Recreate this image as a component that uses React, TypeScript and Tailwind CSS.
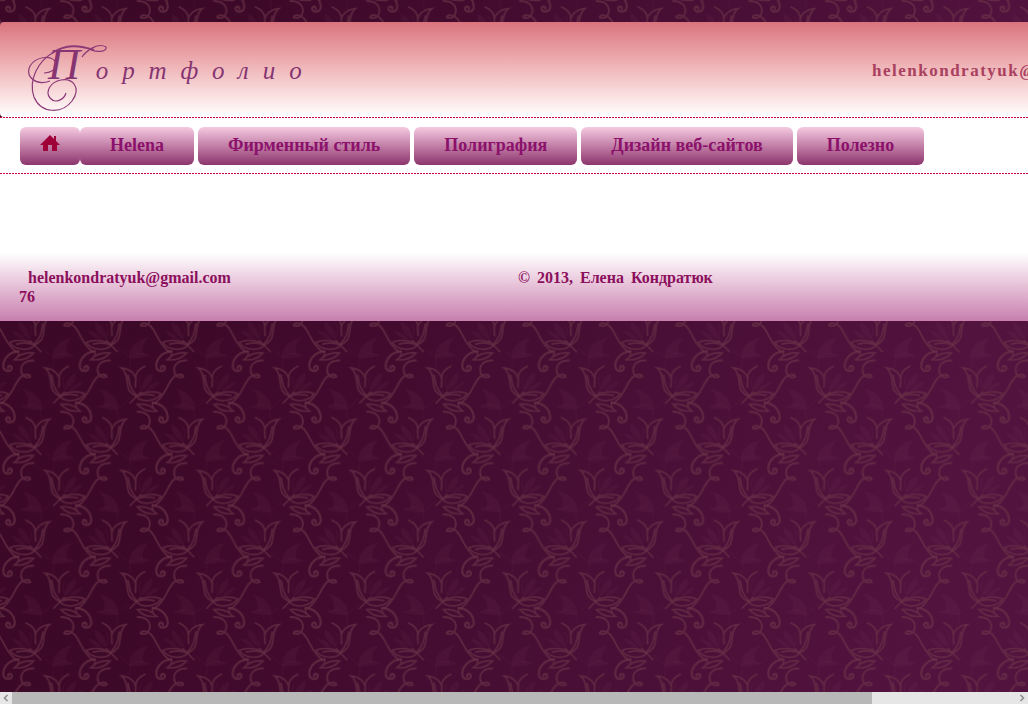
import React from "react";

const NAV = ["Фирменный стиль", "Полиграфия", "Дизайн веб-сайтов", "Полезно"];

function Flower() {
  return (
    <>
      <g fill="none" stroke="#6e3548" strokeOpacity="0.62" strokeLinecap="round">
        <path strokeWidth="5.5" d="M183 -33C205 -33 222 -22 220 -2C219 15 205 21 193 17C190 9 210 5 222 18C242 38 245 72 278 95" />
        <path strokeWidth="6.5" d="M284 94C252 98 236 122 240 143C245 158 268 155 265 142C263 135 252 137 254 145" />
        <path strokeWidth="5" d="M259 67C280 57 318 61 334 75C318 95 274 91 259 67ZM280 72C295 68 318 68 330 75M320 62L352 95" />
        <path strokeWidth="5" d="M285 94C287 106 281 114 273 119C298 122 318 113 330 99C310 97 290 100 273 119" />
        <path strokeWidth="5" d="M308 -15C324 -8 335 3 336 20C338 8 352 -8 378 -10C354 8 366 42 353 60C347 68 341 72 333 75M335 18L336 47M358 12C354 35 353 50 333 72" />
      </g>
      <g fill="#7a3d59" fillOpacity="0.12">
        <path d="M388 114C384 84 410 59 446 52C428 70 426 86 430 104C414 97 400 105 388 114Z" />
        <path d="M388 114C408 94 434 96 452 107C428 112 408 117 388 114Z" />
        <path d="M318 58C292 42 282 20 286 6C306 14 320 35 318 58ZM306 60C290 58 270 44 264 32C285 34 300 45 306 60Z" />
      </g>
      <path fill="none" stroke="#7a3d59" strokeOpacity="0.16" strokeWidth="2" d="M355 82Q368 96 392 114L388 145M318 57Q330 30 318 12" />
    </>
  );
}

function Backdrop() {
  return (
    <svg className="absolute inset-0 -z-10 h-full w-full" aria-hidden="true">
      <defs>
        <linearGradient id="plum" x1="0" y1="0" x2="1" y2="0.15">
          <stop offset="0" stopColor="#3b0827" />
          <stop offset="0.25" stopColor="#3d0929" />
          <stop offset="1" stopColor="#52133e" />
        </linearGradient>
        <pattern id="floral" width="229.5" height="308" patternUnits="userSpaceOnUse" patternTransform="translate(0 320) scale(0.33333)">
          {[-459, -229.5, 0].map((x) =>
            [-308, 0, 308].map((y) => (
              <g key={`${x},${y}`} transform={`translate(${x} ${y})`}>
                <Flower />
              </g>
            ))
          )}
          {[-459, -229.5, 0].map((x) =>
            [-462, -154, 154].map((y) => (
              <g key={`${x},${y}`} transform={`translate(${x + 513} ${y}) scale(-1 1)`}>
                <Flower />
              </g>
            ))
          )}
        </pattern>
      </defs>
      <rect width="100%" height="100%" fill="url(#plum)" />
      <rect width="100%" height="100%" fill="url(#floral)" />
    </svg>
  );
}

function DashedRule() {
  return <div className="h-px bg-[repeating-linear-gradient(90deg,#cc0044_0_2px,#ffffff_2px_3px)]" />;
}

export default function App() {
  return (
    <div className="relative isolate flex min-h-screen flex-col overflow-hidden pt-[22px] font-['Liberation_Serif',serif] font-bold">
      <Backdrop />
      <header className="flex h-[95px] items-center justify-between overflow-hidden rounded-l bg-linear-to-b from-[#d9747d] to-white pl-7">
        <h1 className="relative mt-4 h-[68px] pl-5 text-[#863472]">
          <svg className="absolute top-0 left-0 h-[70px] w-20" viewBox="0 0 80 70" fill="none" stroke="#8c3a78" aria-hidden="true">
            <path strokeWidth="1.2" d="M16 29C22 29 28 26 28 20C26 10 8 12 2 22C-3 33 8 42 22 37" />
            <path strokeWidth="1.2" d="M54 13C58 7 70 -2 78 3C79 7 72 9 63 6" />
            <path strokeWidth="2" d="M66 6C51 1 38 0 24 9" />
            <path strokeWidth="1.2" d="M26 8C10 17 0 36 6 53C13 70 34 70 44 57C54 43 44 34 33 36C22 38 17 48 22 54C27 60 36 56 38 49" />
          </svg>
          <span className="flex items-baseline font-normal italic">
            <span className="text-[44px] leading-[42px]">П</span>
            <span className="pl-4 text-[25px] tracking-[14px]">ортфолио</span>
          </span>
        </h1>
        <a href="mailto:helenkondratyuk@gmail.com" className="w-[156px] shrink-0 pt-0.5 text-[17px] tracking-[1.5px] whitespace-nowrap text-[#aa4060]">
          helenkondratyuk@gmail.com
        </a>
      </header>
      <DashedRule />
      <nav className="flex h-[55px] items-center gap-1 bg-white pl-5">
        <div className="flex">
          <a href="#home" aria-label="Home" className="flex h-[38px] w-[60px] justify-center rounded-md bg-linear-to-b from-[#f5cae2] to-[#8c346e] pt-2">
            <svg className="h-[17px] w-5" viewBox="0 0 20 17" fill="#a00038" aria-hidden="true">
              <path d="M10 0L14 4V1H16V6L20 10H17V16H12V10H8V16H3V10H0Z" />
            </svg>
          </a>
          <a href="#helena" className="flex h-[38px] items-center rounded-md bg-linear-to-b from-[#f5cae2] to-[#8c346e] px-[30px] pb-0.5 text-lg text-[#8b116b]">
            Helena
          </a>
        </div>
        {NAV.map((label) => (
          <a key={label} href="#section" className="flex h-[38px] items-center rounded-md bg-linear-to-b from-[#f5cae2] to-[#8c346e] px-[30px] pb-0.5 text-lg whitespace-nowrap text-[#8b116b]">
            {label}
          </a>
        ))}
      </nav>
      <DashedRule />
      <main className="h-[79px] bg-white" />
      <footer className="grid grid-cols-2 bg-linear-to-b from-white to-[#c77fae] py-[15px] text-base leading-[19px] text-[#8b0f5c]">
        <div className="pl-[19px]">
          <a href="mailto:helenkondratyuk@gmail.com" className="block pl-[9px]">helenkondratyuk@gmail.com</a>
          <span>76</span>
        </div>
        <p className="pl-1 [word-spacing:3px]">© 2013, Елена Кондратюк</p>
      </footer>
      <div className="mt-auto flex h-3 bg-[#e6e6e6] text-[#8a8a8a]">
        <button aria-label="Scroll left" className="flex w-3 items-center justify-center">
          <svg className="h-2 w-2" viewBox="0 0 8 8" fill="none" stroke="currentColor" strokeWidth="1.5"><path d="M5.5 1L2.5 4L5.5 7" /></svg>
        </button>
        <div className="flex-1">
          <div className="h-full w-[85.7%] bg-[#b8b8b8]" />
        </div>
        <button aria-label="Scroll right" className="flex w-3 items-center justify-center">
          <svg className="h-2 w-2" viewBox="0 0 8 8" fill="none" stroke="currentColor" strokeWidth="1.5"><path d="M2.5 1L5.5 4L2.5 7" /></svg>
        </button>
      </div>
    </div>
  );
}
